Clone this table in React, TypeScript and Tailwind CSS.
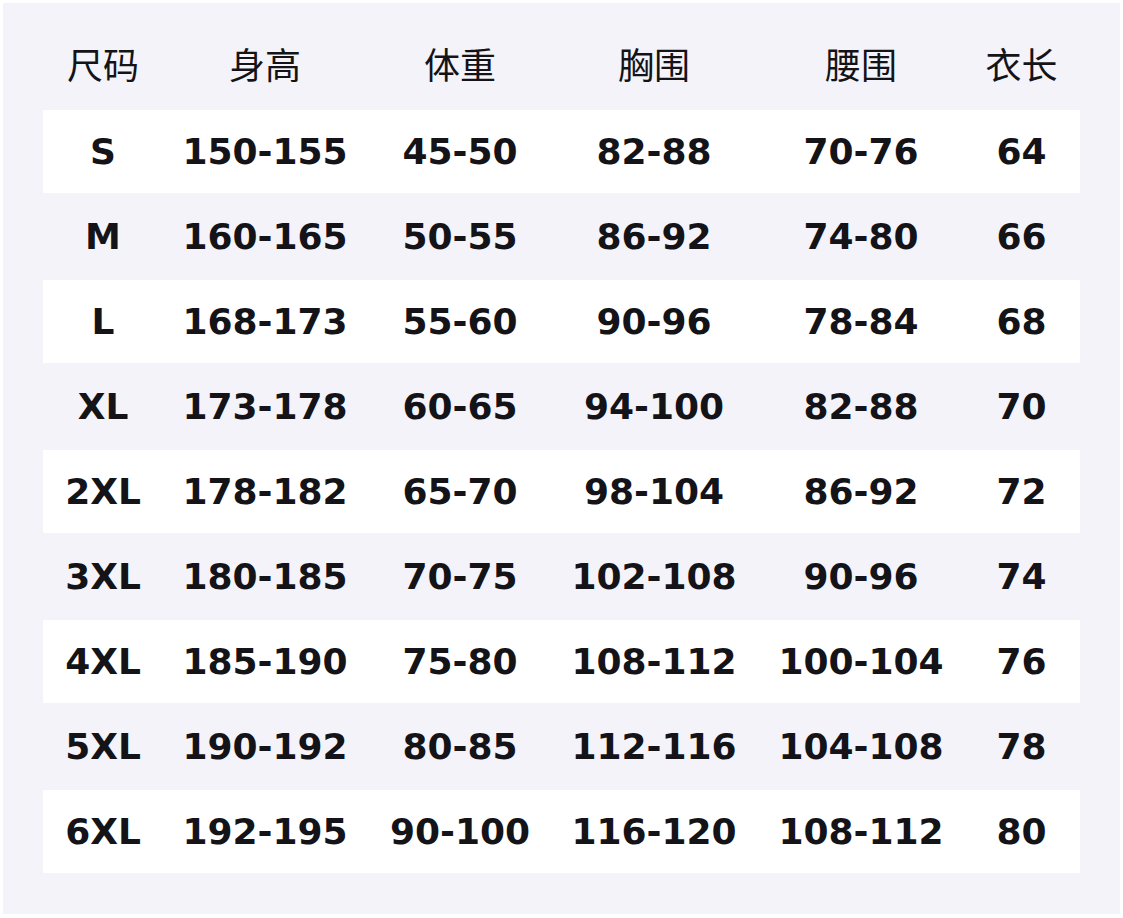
const headers = ["尺码", "身高", "体重", "胸围", "腰围", "衣长"];

const rows = [
  ["S", "150-155", "45-50", "82-88", "70-76", "64"],
  ["M", "160-165", "50-55", "86-92", "74-80", "66"],
  ["L", "168-173", "55-60", "90-96", "78-84", "68"],
  ["XL", "173-178", "60-65", "94-100", "82-88", "70"],
  ["2XL", "178-182", "65-70", "98-104", "86-92", "72"],
  ["3XL", "180-185", "70-75", "102-108", "90-96", "74"],
  ["4XL", "185-190", "75-80", "108-112", "100-104", "76"],
  ["5XL", "190-192", "80-85", "112-116", "104-108", "78"],
  ["6XL", "192-195", "90-100", "116-120", "108-112", "80"],
];

const cols = "grid grid-cols-[120px_204px_186px_202px_212px_113px]";

export default function App() {
  return (
    <div className="w-[1123px] h-[918px] bg-white p-[3px]">
      <div className="w-[1117px] h-[911px] bg-[#f4f3f9] px-[40px] pt-[20px] text-[#131318]">
        <div className="flex flex-col gap-[2px]">
          {/* 表头 */}
          <div
            className={`${cols} h-[85px] pb-[6px] items-center text-[36px] font-normal`}
            style={{ fontFamily: '"Noto Sans CJK SC", "Noto Sans", sans-serif' }}
          >
            {headers.map((h, i) => (
              <div key={h} className={`text-center leading-none ${i === 5 ? "pl-[1px] pr-[5px]" : ""}`}>
                {h}
              </div>
            ))}
          </div>
          {rows.map((r, ri) => (
            <div
              key={r[0]}
              className={`${cols} h-[83px] items-center text-[36px] font-bold ${ri % 2 === 0 ? "bg-white" : ""}`}
              style={{ fontFamily: '"DejaVu Sans", sans-serif' }}
            >
              {r.map((c, ci) => (
                <div key={ci} className={`text-center leading-none ${ci === 5 ? "pl-[1px] pr-[5px]" : ""}`}>
                  {c}
                </div>
              ))}
            </div>
          ))}
        </div>
      </div>
    </div>
  );
}
